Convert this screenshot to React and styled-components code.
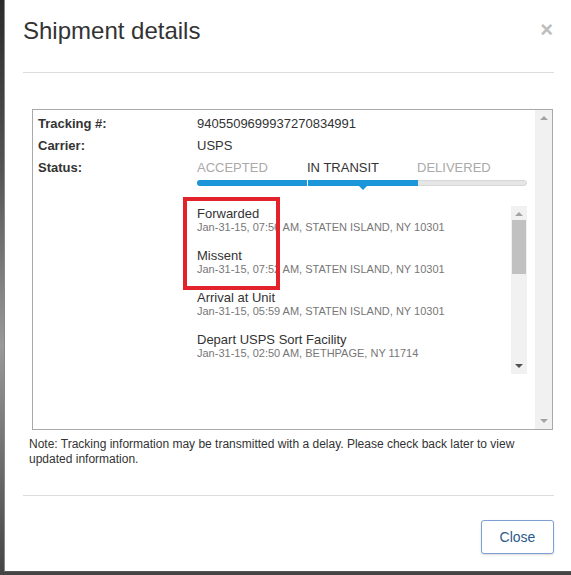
import React from 'react'
import styled, { createGlobalStyle } from 'styled-components'

const GlobalStyle = createGlobalStyle`
  html, body { margin: 0; padding: 0; background: #3b3b3b; }
  body { font-family: "Liberation Sans", Arial, sans-serif; overflow: hidden; }
`

const events = [
  { title: 'Forwarded', detail: 'Jan-31-15, 07:56 AM, STATEN ISLAND, NY 10301' },
  { title: 'Missent', detail: 'Jan-31-15, 07:52 AM, STATEN ISLAND, NY 10301' },
  { title: 'Arrival at Unit', detail: 'Jan-31-15, 05:59 AM, STATEN ISLAND, NY 10301' },
  { title: 'Depart USPS Sort Facility', detail: 'Jan-31-15, 02:50 AM, BETHPAGE, NY 11714' },
]

const steps = [
  { label: 'ACCEPTED', state: 'done' },
  { label: 'IN TRANSIT', state: 'current' },
  { label: 'DELIVERED', state: 'todo' },
]

export default function App() {
  return (
    <Page>
      <GlobalStyle />
      <Modal>
        <Header>
          <Title>Shipment details</Title>
          <CloseX>×</CloseX>
        </Header>
        <Body>
          <Panel>
            <PanelInner>
              <Row>
                <Label>Tracking #:</Label>
                <Value>9405509699937270834991</Value>
              </Row>
              <Row>
                <Label>Carrier:</Label>
                <Value>USPS</Value>
              </Row>
              <Row>
                <Label>Status:</Label>
                <StatusCell>
                  <Steps>
                    {steps.map((s) => (
                      <Step key={s.label} current={s.state === 'current'}>{s.label}</Step>
                    ))}
                  </Steps>
                  <Track>
                    <Fill />
                    <Tick />
                    <Pointer />
                  </Track>
                  <EventBox>
                    <EventList>
                      {events.map((e) => (
                        <Event key={e.title}>
                          <EventTitle>{e.title}</EventTitle>
                          <EventDetail>{e.detail}</EventDetail>
                        </Event>
                      ))}
                    </EventList>
                    <Scrollbar>
                      <ArrowUp />
                      <ThumbArea>
                        <Thumb />
                      </ThumbArea>
                      <ArrowDown dark />
                    </Scrollbar>
                    <Highlight />
                  </EventBox>
                </StatusCell>
              </Row>
            </PanelInner>
            <OuterScroll>
              <ArrowUp />
              <ArrowDown />
            </OuterScroll>
          </Panel>
          <Note>
            Note: Tracking information may be transmitted with a delay. Please check back later to view
            updated information.
          </Note>
        </Body>
        <Footer>
          <Button>Close</Button>
        </Footer>
      </Modal>
    </Page>
  )
}

const Page = styled.div`
  width: 571px;
  height: 575px;
  overflow: hidden;
  background: linear-gradient(#2a2a2a, #555 30%, #999 60%, #444);
`

const Modal = styled.div`
  margin-left: 4px;
  width: 620px;
  height: 572px;
  background: #fff;
  border-left: 1px solid #888;
  border-bottom: 1px solid #555;
  box-sizing: border-box;
`

const Header = styled.div`
  width: 531px;
  margin-left: 18px;
  height: 73px;
  box-sizing: border-box;
  border-bottom: 1px solid #dcdcdc;
  display: flex;
  justify-content: space-between;
  align-items: flex-start;
  padding-top: 17px;
`

const Title = styled.h1`
  margin: 0;
  font-size: 24px;
  font-weight: normal;
  color: #333;
  line-height: 28px;
`

const CloseX = styled.span`
  font-size: 22px;
  font-weight: bold;
  color: #bdbdbd;
  line-height: 20px;
  margin-top: 3px;
  margin-right: 1px;
`

const Body = styled.div`
  padding: 36px 0 0 6px;
  width: 531px;
  height: 423px;
  box-sizing: border-box;
  border-bottom: 1px solid #dcdcdc;
  margin-left: 18px;
`

const Panel = styled.div`
  margin-left: 3px;
  width: 521px;
  height: 321px;
  border: 1px solid #a9a9a9;
  box-sizing: border-box;
  display: flex;
`

const PanelInner = styled.div`
  flex: 1;
  padding: 3px 0 0 5px;
`

const Row = styled.div`
  display: flex;
  min-height: 22px;
  align-items: flex-start;
`

const Label = styled.div`
  width: 159px;
  font-size: 13px;
  font-weight: bold;
  color: #333;
  line-height: 22px;
`

const Value = styled.div`
  font-size: 13px;
  color: #333;
  line-height: 22px;
`

const StatusCell = styled.div`
  width: 330px;
`

const Steps = styled.div`
  display: flex;
`

const Step = styled.div`
  width: 110px;
  font-size: 13px;
  line-height: 22px;
  color: ${(p) => (p.current ? '#333' : '#aaa')};
`

const Track = styled.div`
  position: relative;
  height: 6px;
  margin-top: 1px;
  background: #e6e6e6;
  border: 1px solid #d8d8d8;
  border-radius: 4px;
  box-sizing: border-box;
`

const Fill = styled.div`
  position: absolute;
  left: -1px;
  top: -1px;
  bottom: -1px;
  width: 221px;
  background: #1a96d9;
  border-radius: 4px 0 0 4px;
`

const Tick = styled.div`
  position: absolute;
  left: 109px;
  top: -1px;
  bottom: -1px;
  width: 1px;
  background: #fff;
`

const Pointer = styled.div`
  position: absolute;
  left: 160px;
  top: 4px;
  width: 0;
  height: 0;
  border-left: 5px solid transparent;
  border-right: 5px solid transparent;
  border-top: 5px solid #1a96d9;
`

const EventBox = styled.div`
  position: relative;
  margin-top: 20px;
  height: 168px;
  display: flex;
`

const EventList = styled.div`
  flex: 1;
  overflow: hidden;
  display: flex;
  flex-direction: column;
  gap: 14px;
  padding-top: 0;
`

const Event = styled.div`
  display: flex;
  flex-direction: column;
`

const EventTitle = styled.div`
  font-size: 13px;
  line-height: 15px;
  color: #333;
`

const EventDetail = styled.div`
  font-size: 11px;
  line-height: 13px;
  color: #777;
`

const Scrollbar = styled.div`
  width: 16px;
  background: #f1f1f1;
  display: flex;
  flex-direction: column;
  align-items: center;
`

const ThumbArea = styled.div`
  flex: 1;
  width: 100%;
  padding-top: 4px;
  box-sizing: border-box;
`

const Thumb = styled.div`
  margin: 0 auto;
  width: 14px;
  height: 54px;
  background: #c1c1c1;
`

const ArrowUp = styled.div`
  margin: 6px 0 0;
  width: 0;
  height: 0;
  border-left: 4px solid transparent;
  border-right: 4px solid transparent;
  border-bottom: 4px solid #a3a3a3;
`

const ArrowDown = styled.div`
  margin: 0 0 6px;
  width: 0;
  height: 0;
  border-left: 4px solid transparent;
  border-right: 4px solid transparent;
  border-top: 4px solid ${(p) => (p.dark ? '#505050' : '#a3a3a3')};
`

const OuterScroll = styled.div`
  width: 17px;
  background: #f1f1f1;
  display: flex;
  flex-direction: column;
  justify-content: space-between;
  align-items: center;
`

const Highlight = styled.div`
  position: absolute;
  left: -14px;
  top: -9px;
  width: 97px;
  height: 93px;
  border: 4px solid #e3232c;
  box-sizing: border-box;
`

const Note = styled.p`
  margin: 7px 0 0;
  font-size: 12px;
  line-height: 15px;
  color: #333;
  width: 520px;
`

const Footer = styled.div`
  width: 531px;
  margin-left: 18px;
  display: flex;
  justify-content: flex-end;
  padding-top: 24px;
`

const Button = styled.button`
  width: 73px;
  height: 34px;
  background: #fff;
  border: 1px solid #7d9fd4;
  border-radius: 3px;
  box-shadow: 0 1px 2px rgba(0, 0, 0, 0.15);
  font-family: "Liberation Sans", Arial, sans-serif;
  font-size: 14px;
  color: #2a5a8c;
  padding: 0;
  cursor: pointer;
`
